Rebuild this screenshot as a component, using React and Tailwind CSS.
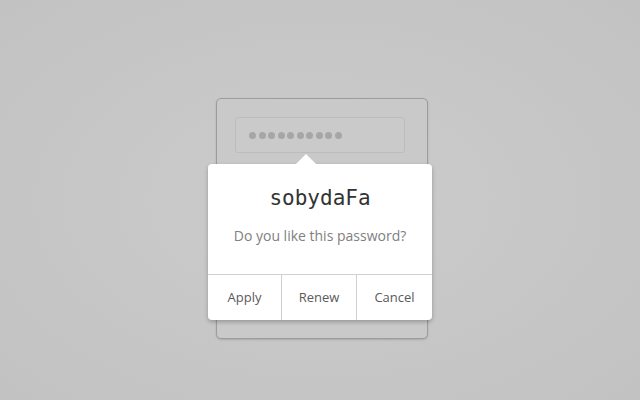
export default function App() {
  const dots = Array.from({ length: 10 });
  return (
    <div className="w-[640px] h-[400px] flex pl-[216px] pt-[98px] bg-[radial-gradient(ellipse_at_center,#cccccc_0%,#c6c6c6_60%,#c2c2c2_100%)] font-['Open_Sans',sans-serif]">
      <div className="relative w-[212px] h-[241px] rounded-[5px] border border-[#9c9c9c] bg-[#c9c9c9] shadow-[0_1px_2px_rgba(0,0,0,0.15)] pl-[18px] pt-[18px]">
        <div className="w-[170px] h-[36px] rounded-[3px] border border-[#bcbcbc] bg-[#cacaca] flex items-center gap-[2.5px] pl-[13px]">
          {dots.map((_, i) => (
            <div key={i} className="w-[7px] h-[7px] rounded-full bg-[#a6a6a6]" />
          ))}
        </div>
        <div className="absolute left-[-9px] top-[65px] w-[224px] h-[156px] rounded-[4px] bg-white shadow-[0_2px_4px_rgba(0,0,0,0.25)] flex flex-col">
          <div className="absolute left-[88px] top-[-10px] w-0 h-0 border-l-[10px] border-r-[10px] border-b-[10px] border-l-transparent border-r-transparent border-b-white" />
          <div className="h-[110px] flex flex-col items-center">
            <div className="mt-[22px] text-[21px] leading-[24px] text-[#333] font-['DejaVu_Sans_Mono',monospace]">sobydaFa</div>
            <div className="mt-[16px] text-[14px] leading-[20px] text-[#808080]">Do you like this password?</div>
          </div>
          <div className="flex-1 flex border-t border-[#d0d0d0] text-[13px] text-[#5a5a5a]">
            <div className="w-[74px] flex items-center justify-center border-r border-[#d0d0d0]">Apply</div>
            <div className="w-[75px] flex items-center justify-center border-r border-[#d0d0d0]">Renew</div>
            <div className="flex-1 flex items-center justify-center">Cancel</div>
          </div>
        </div>
      </div>
    </div>
  );
}
